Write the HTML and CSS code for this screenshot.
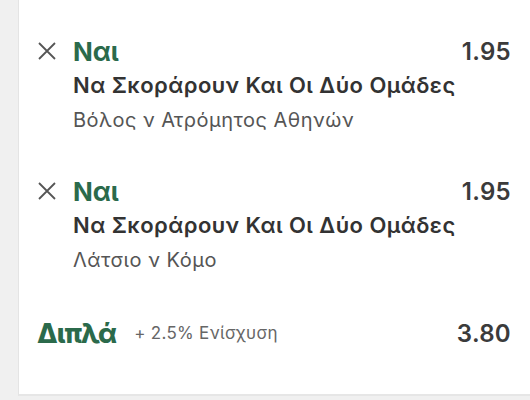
FILE: index.html
```html
<!DOCTYPE html>
<html lang="el">
  <head>
    <meta charset="UTF-8" />
    <meta name="viewport" content="width=device-width, initial-scale=1.0" />
    <title>Δελτίο</title>
    <link rel="stylesheet" href="styles.css">
  </head>
  <body>
    <div class="slip">
      <div class="selection">
        <button class="remove" aria-label="Αφαίρεση">
          <svg width="20" height="20" viewBox="0 0 20 20">
            <path d="M2 2 L18 18 M18 2 L2 18" />
          </svg>
        </button>
        <div class="info">
          <div class="top">
            <span class="pick">Ναι</span>
            <span class="odds">1.95</span>
          </div>
          <p class="market">Να Σκοράρουν Και Οι Δύο Ομάδες</p>
          <p class="event">Βόλος ν Ατρόμητος Αθηνών</p>
        </div>
      </div>

      <div class="selection">
        <button class="remove" aria-label="Αφαίρεση">
          <svg width="20" height="20" viewBox="0 0 20 20">
            <path d="M2 2 L18 18 M18 2 L2 18" />
          </svg>
        </button>
        <div class="info">
          <div class="top">
            <span class="pick">Ναι</span>
            <span class="odds">1.95</span>
          </div>
          <p class="market">Να Σκοράρουν Και Οι Δύο Ομάδες</p>
          <p class="event">Λάτσιο ν Κόμο</p>
        </div>
      </div>

      <div class="total">
        <span class="type">Διπλά</span>
        <span class="boost">+ 2.5% Ενίσχυση</span>
        <span class="odds">3.80</span>
      </div>
    </div>
  </body>
</html>
```

FILE: styles.css
```css
* {
  margin: 0;
  padding: 0;
  box-sizing: border-box;
}

body {
  width: 100%;
  height: 100vh;
  background-color: #f0f0f0;
  padding-left: 18px;
  font-family: 'Inter', 'Roboto', sans-serif;
  color: #333;
  overflow: hidden;
}

.slip {
  height: 396px;
  background-color: #fff;
  border-left: 1px solid #e4e4e4;
  border-bottom: 2px solid #e6e6e6;
  padding: 37px 19px 0 18px;
}

.selection {
  display: flex;
  align-items: flex-start;
  margin-bottom: 42px;
}

.remove {
  border: none;
  background: none;
  width: 36px;
  height: 28px;
  display: flex;
  align-items: center;
  cursor: pointer;
}

.remove svg {
  stroke: #555;
  stroke-width: 1.8;
  fill: none;
}

.info {
  flex: 1;
}

.top {
  display: flex;
  justify-content: space-between;
  align-items: center;
  height: 28px;
}

.pick {
  color: #2b6a4b;
  font-size: 26px;
  font-weight: 700;
}

.odds {
  color: #3b3b3b;
  font-size: 24px;
  font-weight: 600;
  letter-spacing: 0.3px;
}

.market {
  font-size: 22px;
  font-weight: 600;
  letter-spacing: 0.45px;
  color: #333;
  line-height: 40px;
}

.event {
  font-size: 20px;
  letter-spacing: 0.5px;
  color: #555;
  line-height: 30px;
}

.total {
  display: flex;
  align-items: center;
  height: 40px;
  margin-top: -4px;
}

.type {
  color: #2b6a4b;
  font-size: 27px;
  font-weight: 800;
  letter-spacing: -1px;
}

.boost {
  color: #666;
  font-size: 17px;
  letter-spacing: 0.3px;
  margin-left: 18px;
  flex: 1;
}
```
